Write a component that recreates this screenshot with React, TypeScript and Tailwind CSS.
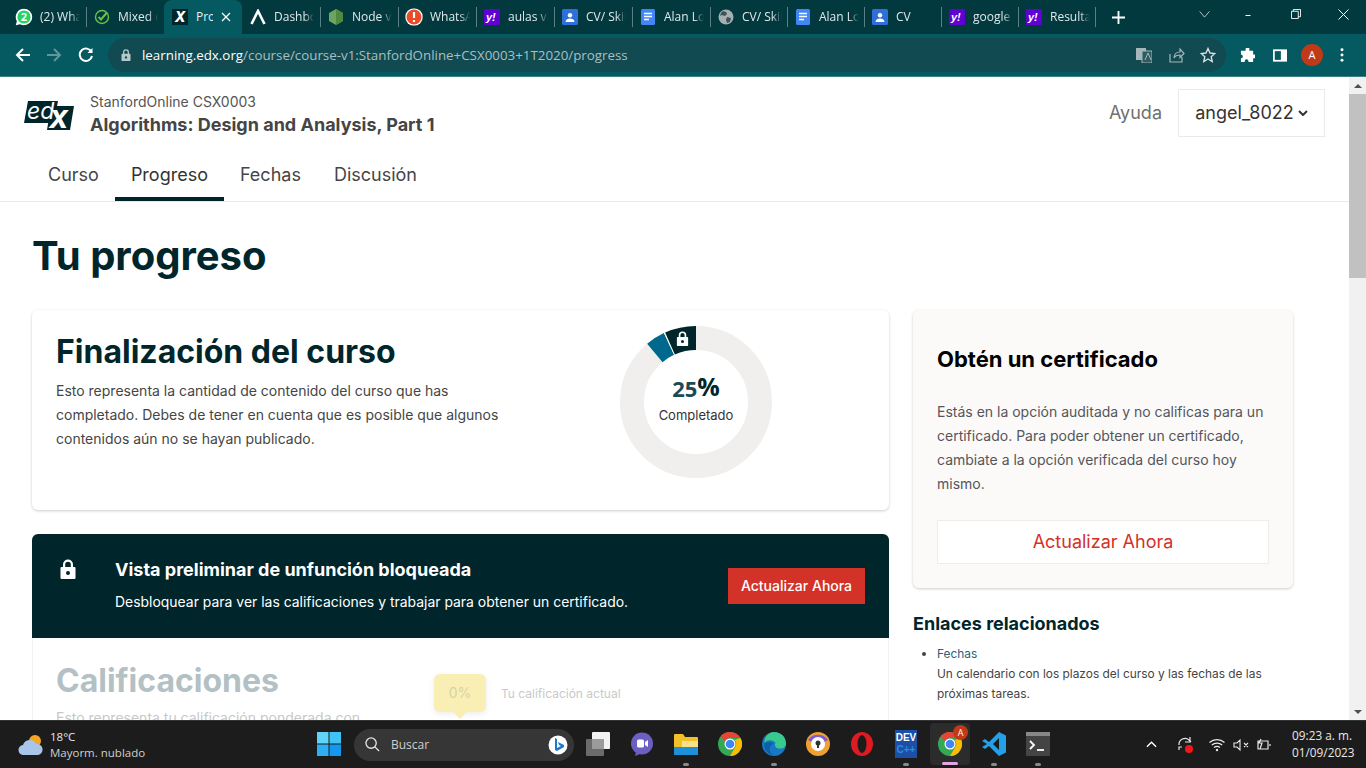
import React from "react";

const Lock = ({ className = "" }: { className?: string }) => (
  <svg viewBox="0 0 16 20" className={className} fill="currentColor">
    <path fillRule="evenodd" d="M3 8V5.500a5 5 0 0 1 10 0V8h1.500a1 1 0 0 1 1 1v10a1 1 0 0 1-1 1h-13a1 1 0 0 1-1-1V9a1 1 0 0 1 1-1H3zm2.200 0h5.600V5.500a2.800 2.800 0 0 0-5.600 0V8zM8 12a2 2 0 1 0 0 4 2 2 0 0 0 0-4z" />
  </svg>
);

const Docs = () => (
  <svg viewBox="0 0 16 16" className="w-4 h-4">
    <rect x="1" y="0" width="14" height="16" rx="1.500" fill="#4285f4" />
    <path d="M4 4.500h8M4 7.500h8M4 10.500h5" stroke="#fff" strokeWidth="1.400" />
  </svg>
);
const Contacts = () => (
  <svg viewBox="0 0 16 16" className="w-4 h-4">
    <rect width="16" height="16" rx="1.500" fill="#2f6fd8" />
    <circle cx="8" cy="6.200" r="2.200" fill="#fff" />
    <path d="M3.500 13c.4-2.600 2.200-3.500 4.500-3.500s4.100.9 4.500 3.500z" fill="#fff" />
  </svg>
);
const Yahoo = () => (
  <svg viewBox="0 0 16 16" className="w-4 h-4">
    <rect width="16" height="16" rx="1" fill="#5f01d1" />
    <text x="2" y="12" fontSize="11" fontWeight="700" fontStyle="italic" fill="#fff" fontFamily="Liberation Sans, sans-serif">y!</text>
  </svg>
);
const favicons: Record<string, React.ReactNode> = {
  wa: (
    <svg viewBox="0 0 16 16" className="w-4 h-4 scale-110">
      <path d="M8 .5a7.500 7.500 0 0 1 0 15 7.400 7.400 0 0 1-3.600-.9L.5 15.500l1-3.700A7.500 7.500 0 0 1 8 .5z" fill="#fff" />
      <circle cx="8" cy="8" r="6" fill="#25d366" />
      <text x="8" y="11.500" textAnchor="middle" fontSize="10" fontWeight="700" fill="#fff" fontFamily="Open Sans, sans-serif">2</text>
    </svg>
  ),
  check: (
    <svg viewBox="0 0 16 16" className="w-4 h-4" fill="none">
      <circle cx="8" cy="8" r="6.500" stroke="#6cc04a" strokeWidth="1.400" />
      <path d="M4.500 8l2.500 2.500 6-7" stroke="#6cc04a" strokeWidth="2" />
    </svg>
  ),
  edx: (
    <svg viewBox="0 0 16 16" className="w-4 h-4">
      <rect width="16" height="16" fill="#00262b" />
      <text x="8" y="13" textAnchor="middle" fontSize="14" fontWeight="800" fontStyle="italic" fill="#fff" fontFamily="Inter, sans-serif">X</text>
    </svg>
  ),
  lambda: (
    <svg viewBox="0 0 16 16" className="w-4 h-4" fill="none">
      <path d="M1.500 15L8 2l6.500 13" stroke="#fff" strokeWidth="2.600" />
    </svg>
  ),
  node: (
    <svg viewBox="0 0 16 16" className="w-4 h-4">
      <path d="M8 0l7 4v8l-7 4-7-4V4z" fill="#6da55f" />
      <path d="M8 0l7 4v8l-7 4z" fill="#4f8a43" />
    </svg>
  ),
  alert: (
    <svg viewBox="0 0 16 16" className="w-4 h-4 scale-110">
      <circle cx="8" cy="8" r="8" fill="#fff" />
      <circle cx="8" cy="8" r="6.800" fill="#ea4c2a" />
      <path d="M8 3.500v5.500M8 10.800v1.800" stroke="#fff" strokeWidth="2" />
    </svg>
  ),
  yahoo: <Yahoo />,
  contacts: <Contacts />,
  docs: <Docs />,
  globe: (
    <svg viewBox="0 0 16 16" className="w-4 h-4">
      <circle cx="8" cy="8" r="7.500" fill="#a5b0b2" />
      <path d="M5 2l3 1 1 2-2 2-3-1-2 1 1-3zM9 8l4 1-1 4-3 1-1-3z" fill="#3c5358" />
    </svg>
  ),
};

const tabs: { icon: string; label: string; active?: boolean; narrow?: boolean; noSep?: boolean }[] = [
  { icon: "wa", label: "(2) WhatsApp" },
  { icon: "check", label: "Mixed content", noSep: true },
  { icon: "edx", label: "Progreso", active: true, noSep: true },
  { icon: "lambda", label: "Dashboard" },
  { icon: "node", label: "Node v18" },
  { icon: "alert", label: "WhatsApp" },
  { icon: "yahoo", label: "aulas virtuales" },
  { icon: "contacts", label: "CV/ Skills" },
  { icon: "docs", label: "Alan Lopez" },
  { icon: "globe", label: "CV/ Skills", narrow: true },
  { icon: "docs", label: "Alan Lopez", narrow: true },
  { icon: "contacts", label: "CV", narrow: true },
  { icon: "yahoo", label: "google drive", narrow: true },
  { icon: "yahoo", label: "Resultados", narrow: true },
];

function Tab({ t }: { t: (typeof tabs)[number] }) {
  return (
    <div
      className={`relative flex items-center h-[34px] shrink-0 pl-2 text-xs ${t.narrow ? "w-[77px]" : "w-[78px]"} ${t.active ? "bg-[#045a60] rounded-t-lg text-[#e6eff0]" : "text-[#dfe8e9]"}`}
    >
      <span className="w-4 h-4 shrink-0">{favicons[t.icon]}</span>
      <span className={`ml-2 overflow-hidden whitespace-nowrap ${t.active ? "w-[17px]" : "w-[40px] [mask-image:linear-gradient(to_right,black_75%,transparent)]"}`}>
        {t.label}
      </span>
      {t.active && (
        <svg viewBox="0 0 10 10" className="w-[10px] h-[10px] ml-[8px]" stroke="#fff" strokeWidth="1.300">
          <path d="M1 1l8 8M9 1l-8 8" />
        </svg>
      )}
      {!t.noSep && !t.active && <span className="ml-auto -mr-px w-px h-[20px] bg-[#5a7f84]" />}
    </div>
  );
}

function TabStrip() {
  return (
    <div className="flex items-end h-[34px] bg-[#02393f] pl-2 text-[#dfe8e9] font-['Open_Sans',sans-serif]">
      {tabs.map((t, i) => (
        <Tab key={i} t={t} />
      ))}
      <svg viewBox="0 0 14 14" className="w-[13px] h-[13px] ml-[17px] mb-[10px]" stroke="#fff" strokeWidth="2">
        <path d="M7 0v14M0 7h14" />
      </svg>
      <div className="ml-auto flex items-center h-full mb-0 text-white">
        <svg viewBox="0 0 12 8" className="w-[11px] h-[7px] mr-[33px] mb-[5px]" fill="none" stroke="#c8d6d8">
          <path d="M.5.5L6 7 11.500.5" />
        </svg>
        <svg viewBox="0 0 10 2" className="w-[10px] h-[1px] mr-[38px] mb-[4px]"><rect width="10" height="2" fill="#fff" /></svg>
        <svg viewBox="0 0 11 11" className="w-[10px] h-[10px] mr-[37px] mb-[6px]" fill="none" stroke="#fff">
          <path d="M.5 2.500h7.500v8H.5zM2.500 2.500V.5h8v8H8" />
        </svg>
        <svg viewBox="0 0 11 11" className="w-[11px] h-[11px] mr-[17px] mb-[6px]" fill="none" stroke="#fff">
          <path d="M.5.5l10 10M10.500.5l-10 10" />
        </svg>
      </div>
    </div>
  );
}

function Toolbar() {
  return (
    <div className="flex items-center h-[43px] bg-[#045a60] border-b border-[#3d8186] font-['Open_Sans',sans-serif]">
      <div className="flex items-center w-[108px] shrink-0 pl-[15px]">
        <svg viewBox="0 0 16 16" className="w-[16px] h-[16px]" fill="none" stroke="#fff" strokeWidth="2">
          <path d="M15 8H2M8 2L2 8l6 6" />
        </svg>
        <svg viewBox="0 0 16 16" className="w-[16px] h-[16px] ml-[15px]" fill="none" stroke="#5f979b" strokeWidth="2">
          <path d="M1 8h13M8 2l6 6-6 6" />
        </svg>
        <svg viewBox="0 0 16 16" className="w-[16px] h-[16px] ml-[16px]" fill="none" stroke="#fff" strokeWidth="2">
          <path d="M13.500 5A6.200 6.200 0 1 0 14 9" />
          <path d="M14.500 1v5h-5z" fill="#fff" stroke="none" />
        </svg>
      </div>
      <div className="flex items-center w-[1118px] h-[34px] shrink-0 bg-[#114a51] rounded-full pl-[13px] pr-[10px] text-[13.350px]">
        <Lock className="w-[10px] h-[12px] text-[#b5c7c9]" />
        <span className="ml-[11px] text-white">learning.edx.org</span>
        <span className="text-[#aabfc2]">/course/course-v1:StanfordOnline+CSX0003+1T2020/progress</span>
        <div className="ml-auto flex items-center gap-[15px]">
          <svg viewBox="0 0 16 16" className="w-[16px] h-[16px] mr-[2px]">
            <rect x="0" y="1" width="10" height="12" fill="#a5b7ba" />
            <rect x="6" y="4" width="10" height="12" fill="#2b5c62" stroke="#a5b7ba" />
            <path d="M9 13l3-7 3 7" fill="none" stroke="#a5b7ba" />
          </svg>
          <svg viewBox="0 0 16 16" className="w-[16px] h-[16px]" fill="none" stroke="#a5b7ba" strokeWidth="1.200">
            <path d="M1 7v8h12v-5M5 11c0-4 3-6 6-6V2l4 4.500-4 4V8c-3 0-5 1-6 3z" />
          </svg>
          <svg viewBox="0 0 16 16" className="w-[16px] h-[16px]" fill="none" stroke="#d5dfe0" strokeWidth="1.400">
            <path d="M8 1.500l2 4.500 4.800.5-3.600 3.200 1 4.800L8 12l-4.200 2.500 1-4.800L1.200 6.500 6 6z" />
          </svg>
        </div>
      </div>
      <div className="flex items-center flex-1 pl-[14px] text-white">
        <svg viewBox="0 0 16 16" className="w-[15px] h-[15px]" fill="#fff">
          <path d="M6 1a2 2 0 0 1 4 0v2h4v4h1a2 2 0 0 1 0 4h-1v4H9v-1a2 2 0 0 0-4 0v1H1v-4a2 2 0 0 0 0-4V3h5z" />
        </svg>
        <svg viewBox="0 0 16 14" className="w-[14px] h-[13px] ml-[18px]">
          <rect x="1" y="1" width="14" height="12" fill="none" stroke="#fff" strokeWidth="2" />
          <rect x="9" y="1" width="6" height="12" fill="#fff" />
        </svg>
        <span className="ml-[14px] w-[22px] h-[22px] rounded-full bg-[#c13a18] text-white text-[11px] flex items-center justify-center">A</span>
        <svg viewBox="0 0 4 16" className="w-[4px] h-[14px] ml-[17px]" fill="#fff">
          <circle cx="2" cy="2" r="1.700" />
          <circle cx="2" cy="8" r="1.700" />
          <circle cx="2" cy="14" r="1.700" />
        </svg>
      </div>
    </div>
  );
}

function EdxLogo() {
  return (
    <svg viewBox="0 0 50 30" className="w-[50px] h-[30px]">
      <polygon points="4,0 34,0 30,22 0,22" fill="#00262b" />
      <polygon points="27,5 50,5 46,29 23,29" fill="#00262b" />
      <text x="3" y="18" fontSize="23" fontStyle="italic" fill="#fff" fontFamily="Inter, sans-serif">ed</text>
      <text x="25" y="27" fontSize="25" fontWeight="800" fontStyle="italic" fill="#fff" fontFamily="Inter, sans-serif">X</text>
    </svg>
  );
}

function Header() {
  return (
    <div className="h-[125px] border-b border-[#e8e8e8]">
      <div className="flex items-start h-[76px] pl-6 pr-[24px]">
        <div className="mt-6">
          <EdxLogo />
        </div>
        <div className="ml-4 mt-[15px]">
          <div className="text-sm leading-5 text-[#555]">StanfordOnline CSX0003</div>
          <div className="text-lg leading-[26px] font-bold text-[#454545]">Algorithms: Design and Analysis, Part 1</div>
        </div>
        <div className="ml-auto mt-3 flex items-center">
          <span className="text-lg text-[#707070]">Ayuda</span>
          <div className="ml-4 flex items-center justify-center w-[147px] h-[48px] border border-[#eaeaea] text-lg text-[#333]">
            angel_8022
            <svg viewBox="0 0 10 6" className="w-[10px] h-[6px] ml-1" fill="none" stroke="#333" strokeWidth="2">
              <path d="M1 1l4 4 4-4" />
            </svg>
          </div>
        </div>
      </div>
      <div className="flex h-[48px] pl-8 text-lg text-[#454545]">
        {["Curso", "Progreso", "Fechas", "Discusión"].map((n, i) => (
          <div
            key={n}
            className={`px-4 pt-[8px] ${i === 1 ? "border-b-4 border-[#00262b] text-[#333]" : ""} ${i === 3 ? "ml-[1px]" : ""}`}
          >
            {n}
          </div>
        ))}
      </div>
    </div>
  );
}

function Donut() {
  return (
    <div className="relative w-[152px] h-[152px]">
      <svg viewBox="0 0 152 152" className="w-[152px] h-[152px] -rotate-90" fill="none">
        <circle cx="76" cy="76" r="64" stroke="#f0efed" strokeWidth="24" />
        <circle cx="76" cy="76" r="64" pathLength={360} stroke="#00688d" strokeWidth="24" strokeDasharray="15 345" strokeDashoffset="-320" />
        <circle cx="76" cy="76" r="64" pathLength={360} stroke="#fff" strokeWidth="24" strokeDasharray="1 359" strokeDashoffset="-335" />
        <circle cx="76" cy="76" r="64" pathLength={360} stroke="#00262b" strokeWidth="24" strokeDasharray="24 336" strokeDashoffset="-336" />
      </svg>
      <Lock className="absolute left-[56px] top-[5px] w-[13px] h-[15px] text-white" />
      <div className="absolute inset-0 flex flex-col items-center pt-[43px]">
        <div className="flex items-end h-[34px] font-['Open_Sans',sans-serif] font-bold text-[#1c4a56]">
          <span className="text-[22px] leading-[30px]">25</span>
          <span className="text-[25px] leading-[33px] text-[#00262b]">%</span>
        </div>
        <div className="text-[13px] leading-[20px] text-[#333] mt-[2px]">Completado</div>
      </div>
    </div>
  );
}

function Page() {
  return (
    <div className="flex-1 overflow-hidden bg-white">
      <Header />
      <div className="px-8 pt-[30px]">
        <h1 className="text-[40px] leading-[48px] font-bold text-[#00262b] mb-[30px]">Tu progreso</h1>
        <div className="flex gap-6 items-start">
          <div className="w-[857px] shrink-0">
            <div className="flex h-[200px] rounded-md bg-white shadow-[0_1px_3px_rgba(0,0,0,0.2)] pl-6 pt-[22px]">
              <div className="w-[460px]">
                <h2 className="text-[32px] leading-[40px] font-bold text-[#00262b]">Finalización del curso</h2>
                <p className="mt-[7px] text-sm leading-6 text-[#454545]">
                  Esto representa la cantidad de contenido del curso que has completado. Debes de tener en cuenta que es posible que algunos contenidos aún no se hayan publicado.
                </p>
              </div>
              <div className="ml-[104px] -mt-[6px]">
                <Donut />
              </div>
            </div>
            <div className="mt-6 h-[104px] flex items-start bg-[#00262b] rounded-t-md text-white pl-[28px] pr-6">
              <Lock className="w-4 h-5 mt-[25px]" />
              <div className="ml-[39px] mt-[22px]">
                <div className="text-lg leading-[28px] font-bold">Vista preliminar de unfunción bloqueada</div>
                <div className="mt-[6px] text-[13.950px] leading-[24px]">Desbloquear para ver las calificaciones y trabajar para obtener un certificado.</div>
              </div>
              <button className="ml-auto mt-[34px] w-[137px] h-[36px] bg-[#d23228] text-sm font-medium text-white">Actualizar Ahora</button>
            </div>
            <div className="flex pl-[23px] border-x border-[#f2f2f2] h-[200px]">
              <div className="w-[346px] shrink-0">
                <h2 className="mt-[23px] text-[32px] leading-[40px] font-bold text-[#b3c1c4]">Calificaciones</h2>
                <p className="mt-[5px] text-sm leading-6 text-[#c8c8c8]">Esto representa tu calificación ponderada con</p>
              </div>
              <div className="relative mt-[36px] ml-[32px] w-[52px] h-[38px] shrink-0 flex items-center justify-center rounded-md bg-[#f9efb4] text-sm text-[#d8d2a6] shadow-[0_2px_6px_rgba(0,0,0,0.08)]">
                0%
                <span className="absolute -bottom-[7px] left-[19px] border-x-[7px] border-t-[7px] border-x-transparent border-t-[#f9efb4]" />
              </div>
              <div className="ml-[15px] mt-[47px] text-xs leading-[18px] text-[#c9c9c9]">Tu calificación actual</div>
            </div>
          </div>
          <div className="w-[380px] shrink-0">
            <div className="h-[278px] rounded-md bg-[#fbfaf9] shadow-[0_1px_3px_rgba(0,0,0,0.2)] px-6 pt-[34px]">
              <h3 className="text-[22px] leading-[30px] font-bold text-black">Obtén un certificado</h3>
              <p className="mt-[26px] text-sm leading-6 text-[#54565a]">
                Estás en la opción auditada y no calificas para un certificado. Para poder obtener un certificado, cambiate a la opción verificada del curso hoy mismo.
              </p>
              <button className="mt-6 w-[332px] h-[44px] bg-white border border-[#ececec] text-lg text-[#d23228]">Actualizar Ahora</button>
            </div>
            <h4 className="mt-[24px] text-lg leading-[24px] font-bold text-[#00262b]">Enlaces relacionados</h4>
            <ul className="mt-[8px] pl-6 list-disc text-[11.900px] leading-5 text-[#454545]">
              <li>
                <span className="text-[#2b5f7a]">Fechas</span>
                <br />
                Un calendario con los plazos del curso y las fechas de las próximas tareas.
              </li>
            </ul>
          </div>
        </div>
      </div>
    </div>
  );
}

function Scrollbar() {
  return (
    <div className="flex flex-col w-[17px] shrink-0 bg-[#f1f1f1]">
      <div className="h-[17px] flex items-center justify-center">
        <span className="border-x-[4px] border-b-[4px] border-x-transparent border-b-[#505050]" />
      </div>
      <div className="h-[184px] bg-[#c1c1c1]" />
      <div className="mt-auto h-[17px] flex items-center justify-center">
        <span className="border-x-[4px] border-t-[4px] border-x-transparent border-t-[#505050]" />
      </div>
    </div>
  );
}

const Dot = () => <span className="absolute -bottom-[1px] left-1/2 -translate-x-1/2 w-[6px] h-[3px] rounded-full bg-[#8a8a8a]" />;

const chrome = (
  <svg viewBox="0 0 24 24" className="w-[24px] h-[24px]">
    <circle cx="12" cy="12" r="12" fill="#34a853" />
    <path d="M12 0a12 12 0 0 1 10.400 6H12a6 6 0 0 0-5.200 3L2.500 4.300A12 12 0 0 1 12 0z" fill="#ea4335" />
    <path d="M22.400 6A12 12 0 0 1 12 24l5.200-9a6 6 0 0 0-.500-7z" fill="#fbbc04" />
    <circle cx="12" cy="12" r="5.500" fill="#fff" />
    <circle cx="12" cy="12" r="4.300" fill="#4285f4" />
  </svg>
);

function TaskIcon({ children, dot, active }: { children: React.ReactNode; dot?: boolean; active?: boolean }) {
  return (
    <div className={`relative w-[40px] h-[42px] mx-[2px] shrink-0 flex items-center justify-center ${active ? "bg-[#2c2c2c] rounded" : ""}`}>
      {children}
      {dot && <Dot />}
      {active && <span className="absolute bottom-0 left-1/2 -translate-x-1/2 w-[16px] h-[3px] rounded-full bg-[#e5a5e5]" />}
    </div>
  );
}

function Taskbar() {
  return (
    <div className="relative flex items-center h-[48px] bg-[#1c1c1c] border-t border-[#333] text-[#e8e8e8] font-['Open_Sans',sans-serif] text-xs">
      <div className="flex items-center w-[313px] shrink-0 pl-[18px]">
        <svg viewBox="0 0 26 22" className="w-[26px] h-[22px]">
          <circle cx="17" cy="7" r="6" fill="#f5a623" />
          <path d="M6 21a5 5 0 0 1-1-10 7 7 0 0 1 13-1 5.500 5.500 0 0 1 2 11z" fill="#a9c5ea" />
        </svg>
        <div className="ml-[6px] leading-[16px] text-[11.500px]">
          <div>18°C</div>
          <div className="text-[#cfcfcf]">Mayorm. nublado</div>
        </div>
      </div>
      <svg viewBox="0 0 24 24" className="w-[24px] h-[24px] ml-[4px] shrink-0 -mt-[1px]">
        <rect x="0" y="0" width="11.500" height="11.500" fill="#5fd4f8" />
        <rect x="12.500" y="0" width="11.500" height="11.500" fill="#3fc3f5" />
        <rect x="0" y="12.500" width="11.500" height="11.500" fill="#2cb0f3" />
        <rect x="12.500" y="12.500" width="11.500" height="11.500" fill="#1597ee" />
      </svg>
      <div className="flex items-center ml-[13px] w-[220px] h-[32px] shrink-0 rounded-full bg-[#363636] pl-[11px] pr-[6px] text-[#cfcfcf]">
        <svg viewBox="0 0 16 16" className="w-[15px] h-[15px]" fill="none" stroke="#e8e8e8" strokeWidth="1.400">
          <circle cx="6.500" cy="6.500" r="5.500" />
          <path d="M10.500 10.500L15 15" />
        </svg>
        <span className="ml-[11px]">Buscar</span>
        <svg viewBox="0 0 20 20" className="w-[20px] h-[20px] ml-auto">
          <circle cx="10" cy="10" r="9.500" fill="#fff" />
          <path d="M7 3l2 1v9l4-2-2-1-1-3 6 3v2l-7 4-2-1z" fill="#1976d2" />
        </svg>
      </div>
      <div className="flex items-center ml-[2px] -mt-[1px]">
        <TaskIcon>
          <svg viewBox="0 0 24 24" className="w-[24px] h-[24px]">
            <rect x="0" y="7" width="18" height="17" fill="#6b6b6b" rx="1" />
            <rect x="6" y="0" width="18" height="17" fill="#f2f2f2" rx="1" />
            <rect x="6" y="7" width="12" height="10" fill="#9b9b9b" />
          </svg>
        </TaskIcon>
        <TaskIcon>
          <svg viewBox="0 0 24 24" className="w-[24px] h-[24px]">
            <circle cx="12" cy="11.500" r="11" fill="#6b5fc2" />
            <path d="M6 20l-1 4 5-2z" fill="#6b5fc2" />
            <rect x="7" y="7.500" width="7" height="8" rx="1.500" fill="#fff" />
            <path d="M15 10l3-2v7l-3-2z" fill="#fff" />
          </svg>
        </TaskIcon>
        <TaskIcon dot>
          <svg viewBox="0 0 24 22" className="w-[24px] h-[22px]">
            <path d="M0 2a1 1 0 0 1 1-1h8l2 3h12a1 1 0 0 1 1 1v16H0z" fill="#f2c029" />
            <rect x="0" y="14" width="24" height="8" fill="#1e90d8" />
            <rect x="8" y="8" width="16" height="6" fill="#fbe08a" />
          </svg>
        </TaskIcon>
        <TaskIcon>{chrome}</TaskIcon>
        <TaskIcon dot>
          <svg viewBox="0 0 24 24" className="w-[24px] h-[24px]">
            <circle cx="12" cy="12" r="12" fill="#1878c4" />
            <path d="M12 0c7 0 12 5 12 11.500 0 4-3.500 5.500-7 5-3.500-.5-5-3-3.500-5.500C11 8 6 7 2.500 11 2 5.500 6.500 0 12 0z" fill="#38c98c" />
            <path d="M2.500 11c-1 6 3 11 9 12.500-3-2-4.500-5-3.500-8 .5-2 2-3.500 4-4.500-4-1.500-7-.5-9.500 0z" fill="#0c5fa8" />
          </svg>
        </TaskIcon>
        <TaskIcon>
          <svg viewBox="0 0 24 24" className="w-[24px] h-[24px]">
            <circle cx="12" cy="12" r="12" fill="#f0a030" />
            <path d="M2 8a12 12 0 0 1 20 0l-6 3H8z" fill="#7c5cd6" />
            <circle cx="12" cy="12" r="7" fill="#fff" />
            <circle cx="12" cy="11" r="2.500" fill="#333" />
            <rect x="11" y="12" width="2" height="4" fill="#333" />
          </svg>
        </TaskIcon>
        <TaskIcon>
          <svg viewBox="0 0 24 24" className="w-[24px] h-[24px]">
            <ellipse cx="12" cy="12" rx="11" ry="12" fill="#e01a22" />
            <ellipse cx="12" cy="12" rx="4.500" ry="9" fill="#1c1c1c" />
          </svg>
        </TaskIcon>
        <TaskIcon dot>
          <div className="w-[22px] h-[28px] bg-[#1d4fa8] flex flex-col items-center justify-center font-['Liberation_Sans',sans-serif] font-bold text-[10px] leading-[12px]">
            <span className="text-white">DEV</span>
            <span className="text-[#2b8fd8]">C++</span>
          </div>
        </TaskIcon>
        <TaskIcon active>
          {chrome}
          <span className="absolute right-[2px] top-[2px] w-[15px] h-[15px] rounded-full bg-[#c13a18] text-white text-[9px] flex items-center justify-center">A</span>
        </TaskIcon>
        <TaskIcon dot>
          <svg viewBox="0 0 24 24" className="w-[24px] h-[24px]">
            <path d="M17 0l7 3.500v17L17 24 7 14l-4 3-3-2 5-3-5-3 3-2 4 3z" fill="#23a0e8" />
            <path d="M17 6v12l-6-6z" fill="#1c1c1c" />
          </svg>
        </TaskIcon>
        <TaskIcon dot>
          <svg viewBox="0 0 24 24" className="w-[24px] h-[24px]">
            <rect width="24" height="24" rx="1" fill="#444" />
            <rect width="24" height="4" fill="#888" />
            <path d="M4 9l4 4-4 4" stroke="#fff" strokeWidth="1.800" fill="none" />
            <path d="M11 18h7" stroke="#fff" strokeWidth="1.800" />
          </svg>
        </TaskIcon>
      </div>
      <div className="ml-auto flex items-center pr-[14px]">
        <svg viewBox="0 0 12 7" className="w-[11px] h-[7px]" fill="none" stroke="#fff" strokeWidth="1.500">
          <path d="M1 6l5-5 5 5" />
        </svg>
        <svg viewBox="0 0 18 18" className="w-[18px] h-[18px] ml-[20px]" fill="none" stroke="#e8e8e8" strokeWidth="1.200">
          <path d="M2 9a6 6 0 0 1 10-5l2 2M13 1v5H8M2 14v-3h3" />
          <circle cx="12" cy="13" r="4" fill="#f01a1a" stroke="none" />
        </svg>
        <svg viewBox="0 0 16 14" className="w-[16px] h-[14px] ml-[14px]" fill="none" stroke="#e8e8e8" strokeWidth="1.200">
          <path d="M.5 4.500a11 11 0 0 1 15 0M2.800 7a8 8 0 0 1 10.400 0M5 9.500a5 5 0 0 1 6 0" />
          <circle cx="8" cy="12" r="1.200" fill="#e8e8e8" stroke="none" />
        </svg>
        <svg viewBox="0 0 16 14" className="w-[16px] h-[14px] ml-[8px]" fill="none" stroke="#e8e8e8" strokeWidth="1.100">
          <path d="M1 5v4h3l3 3V2L4 5zM11 5l4 4M15 5l-4 4" />
        </svg>
        <svg viewBox="0 0 16 14" className="w-[16px] h-[14px] ml-[6px]" fill="none" stroke="#e8e8e8" strokeWidth="1.200">
          <path d="M3 3h10v8H3zM15 6v2M6 1L4 5h3l-2 6" />
        </svg>
        <div className="ml-[21px] w-[60px] text-right text-[11.800px] leading-[17px] text-[#e8e8e8] whitespace-nowrap -mt-[1px]">
          <div>09:23 a. m.</div>
          <div>01/09/2023</div>
        </div>
      </div>
    </div>
  );
}

export default function App() {
  return (
    <div className="flex flex-col w-[1366px] h-[768px] overflow-hidden font-['Inter',sans-serif]">
      <TabStrip />
      <Toolbar />
      <div className="flex h-[643px]">
        <Page />
        <Scrollbar />
      </div>
      <Taskbar />
    </div>
  );
}
